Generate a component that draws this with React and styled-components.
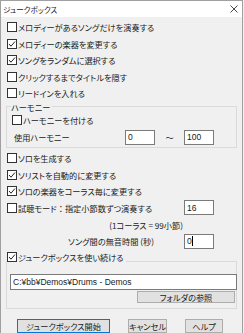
import React from "react";
import styled, { createGlobalStyle } from "styled-components";

const Global = createGlobalStyle`
  html, body {
    margin: 0;
    padding: 0;
    background: #f0f0f0;
  }
  body {
    font-family: "Noto Sans CJK JP", "Noto Sans", sans-serif;
    font-size: 8.2px;
    color: #1a1a1a;
    font-feature-settings: "palt" 1;
  }
`;

const Window = styled.div`
  width: 243px;
  height: 333px;
  box-sizing: border-box;
  border: 1px solid #a0a0a0;
  border-bottom: none;
  background: #f0f0f0;
  display: flex;
  flex-direction: column;
  overflow: hidden;
`;

const TitleBar = styled.div`
  height: 16px;
  flex: none;
  background: #fff;
  display: flex;
  align-items: center;
  justify-content: space-between;
  padding: 0 4px 0 2px;
  font-size: 7.6px;
`;

const Body = styled.div`
  display: flex;
  flex-direction: column;
  padding: 2px 5px 0 5px;
`;

const Row = styled.div`
  height: ${(p) => p.h || 16.5}px;
  margin-top: ${(p) => p.mt || 0}px;
  display: flex;
  align-items: center;
  padding-left: ${(p) => p.indent ?? 1}px;
  white-space: nowrap;
`;

const Box = styled.span`
  width: 10px;
  height: 10px;
  box-sizing: border-box;
  border: 1px solid #333;
  background: #fff;
  display: inline-flex;
  align-items: center;
  justify-content: center;
  margin-right: 1px;
  flex: none;
`;

const Check = ({ checked, children }) => (
  <>
    <Box>
      {checked && (
        <svg width="8" height="8" viewBox="0 0 8 8">
          <polyline points="1,4 3,6.2 7,1.5" fill="none" stroke="#222" strokeWidth="1" />
        </svg>
      )}
    </Box>
    <span>{children}</span>
  </>
);

const Colon = styled.span`
  font-feature-settings: normal;
`;

const Group = styled.fieldset`
  margin: 0;
  padding: 0 0 ${(p) => p.pb || 1}px 4px;
  border: 1px solid #dadada;
  min-width: 0;
`;

const Legend = styled.legend`
  padding: 0 2px ${(p) => p.pb || 0}px 0;
  margin-left: ${(p) => p.offset || 0}px;
  line-height: 10px;
`;

const TextBox = styled.div`
  width: ${(p) => p.w || 30}px;
  height: ${(p) => p.h || 15}px;
  margin-left: ${(p) => p.ml || 0}px;
  box-sizing: border-box;
  border: 1px solid #7a7a7a;
  background: #fff;
  display: flex;
  align-items: center;
  padding-left: 2px;
  font-family: "Liberation Sans", "Noto Sans CJK JP", sans-serif;
  font-size: 8.5px;
  font-feature-settings: normal;
  white-space: nowrap;
`;

const Caret = styled.span`
  display: inline-block;
  width: 1px;
  height: 10px;
  background: #000;
`;

const HarmonyRow = styled.div`
  height: 17px;
  display: grid;
  grid-template-columns: 111px 30px 29px 30px;
  align-items: center;
  padding-left: 3px;
`;

const Tilde = styled.span`
  text-align: center;
`;

const TrailingRow = styled.div`
  height: ${(p) => p.h || 16.7}px;
  display: grid;
  grid-template-columns: minmax(0, 1fr) 30px;
  align-items: center;
  padding-right: 23px;
  white-space: nowrap;
`;

const Label = styled.span`
  padding-left: ${(p) => p.indent || 0}px;
  padding-right: ${(p) => p.gap || 0}px;
  display: flex;
  align-items: center;
  justify-content: ${(p) => (p.right ? "flex-end" : "flex-start")};
`;

const Button = styled.div`
  height: ${(p) => p.h || 14}px;
  width: ${(p) => p.w}px;
  box-sizing: border-box;
  border: 1px solid ${(p) => (p.primary ? "#0078d7" : "#adadad")};
  background: #e1e1e1;
  display: flex;
  align-items: center;
  justify-content: center;
  white-space: nowrap;
`;

const BrowseLine = styled.div`
  display: flex;
  justify-content: flex-end;
  margin-top: 1px;
  padding-right: 1px;
`;

const Footer = styled.div`
  display: flex;
  gap: 18px;
  padding: 0 0 0 11px;
  margin-top: 10px;
`;

const CloseX = () => (
  <svg width="8" height="8" viewBox="0 0 8 8">
    <path d="M0.5 0.5 L7.5 7.5 M7.5 0.5 L0.5 7.5" stroke="#333" strokeWidth="0.9" />
  </svg>
);

export default function App() {
  return (
    <>
      <Global />
      <Window>
        <TitleBar>
          <span>ジュークボックス</span>
          <CloseX />
        </TitleBar>
        <Body>
          <Row><Check>メロディーがあるソングだけを演奏する</Check></Row>
          <Row><Check checked>メロディーの楽器を変更する</Check></Row>
          <Row><Check checked>ソングをランダムに選択する</Check></Row>
          <Row><Check>クリックするまでタイトルを隠す</Check></Row>
          <Row><Check>リードインを入れる</Check></Row>
          <Group>
            <Legend>ハーモニー</Legend>
            <Row indent={1} h={17}><Check>ハーモニーを付ける</Check></Row>
            <HarmonyRow>
              <span>使用ハーモニー</span>
              <TextBox>0</TextBox>
              <Tilde>〜</Tilde>
              <TextBox>100</TextBox>
            </HarmonyRow>
          </Group>
          <Row h={16.7} mt={2}><Check>ソロを生成する</Check></Row>
          <Row h={16.7}><Check checked>ソリストを自動的に変更する</Check></Row>
          <Row h={16.7}><Check checked>ソロの楽器をコーラス毎に変更する</Check></Row>
          <TrailingRow>
            <Label indent={1}>
              <Check>試聴モード<Colon>：</Colon>指定小節数ずつ演奏する</Check>
            </Label>
            <TextBox>16</TextBox>
          </TrailingRow>
          <TrailingRow h={17}>
            <Label right gap={1}>(1コーラス = 99小節)</Label>
          </TrailingRow>
          <TrailingRow h={16}>
            <Label right gap={30}>ソング間の無音時間 (秒)</Label>
            <TextBox>0<Caret /></TextBox>
          </TrailingRow>
          <Group pb={5}>
            <Legend offset={-4} pb={9}>
              <Row h={16} indent={0}><Check checked>ジュークボックスを使い続ける</Check></Row>
            </Legend>
            <TextBox w={227} h={16} ml={-1}>C:¥bb¥Demos¥Drums - Demos</TextBox>
            <BrowseLine>
              <Button w={98} h={12}>フォルダの参照</Button>
            </BrowseLine>
          </Group>
          <Footer>
            <Button primary w={93} h={14}>ジュークボックス開始</Button>
            <Button w={39} h={14}>キャンセル</Button>
            <Button w={38} h={14}>ヘルプ</Button>
          </Footer>
        </Body>
      </Window>
    </>
  );
}
